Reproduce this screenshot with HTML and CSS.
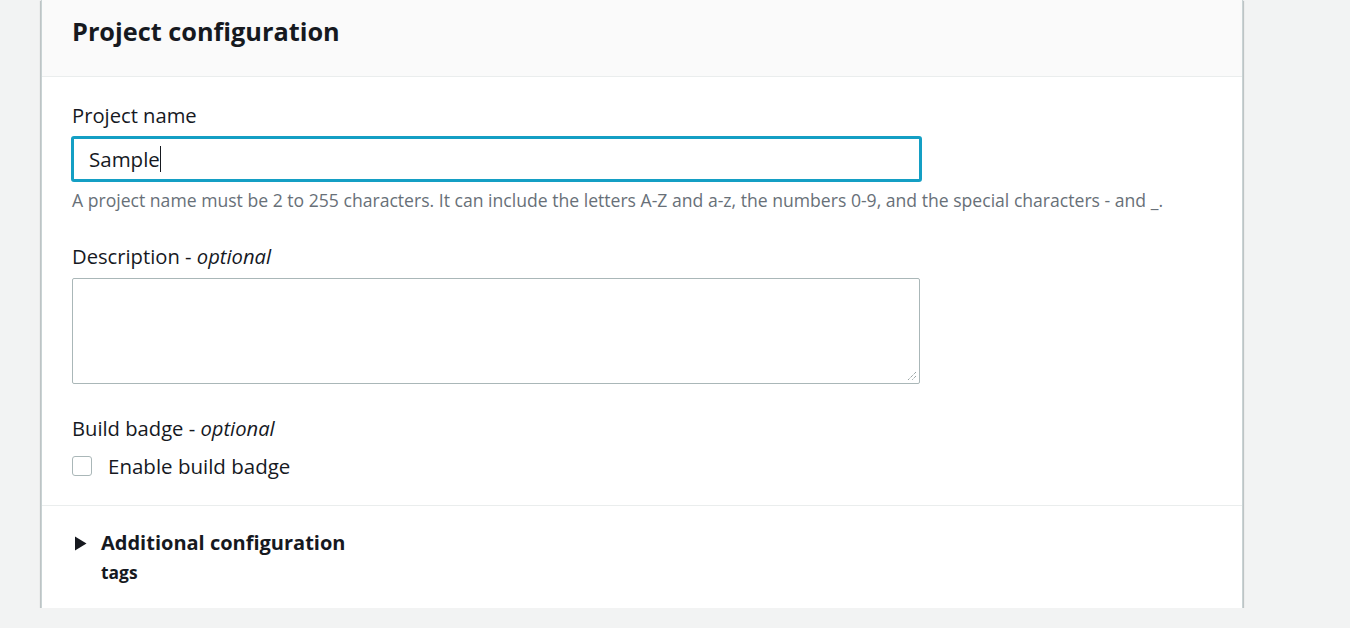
FILE: index.html
```html
<!DOCTYPE html>
<html lang="en">
<head>
<meta charset="utf-8">
<title>Project configuration</title>
<link rel="stylesheet" href="styles.css">
</head>
<body>
<div class="page">
  <section class="card">
    <header class="card-header">
      <h2 class="card-title">Project configuration</h2>
    </header>
    <div class="card-body">
      <div class="field field-name">
        <label class="label">Project name</label>
        <div class="input focused"><span class="value">Sample</span><span class="caret"></span></div>
        <p class="hint">A project name must be 2 to 255 characters. It can include the letters A-Z and a-z, the numbers 0-9, and the special characters - and _.</p>
      </div>
      <div class="field field-desc">
        <label class="label">Description - <i>optional</i></label>
        <div class="textarea">
          <svg class="grip" width="12" height="12" viewBox="0 0 12 12"><path d="M11 3 L3 11 M11 7 L7 11" stroke="#6b7b7c" stroke-width="1" stroke-dasharray="1 1" fill="none"/></svg>
        </div>
      </div>
      <div class="field field-badge">
        <label class="label">Build badge - <i>optional</i></label>
        <div class="check-row">
          <span class="checkbox"></span>
          <span class="check-label">Enable build badge</span>
        </div>
      </div>
    </div>
    <div class="card-footer">
      <div class="expander">
        <svg class="caret-icon" width="13" height="15" viewBox="0 0 13 15"><path d="M1 0.5 L12.5 7.5 L1 14.5 Z" fill="#16191f"/></svg>
        <span class="expander-title">Additional configuration</span>
      </div>
      <div class="expander-sub">tags</div>
    </div>
  </section>
</div>
</body>
</html>
```

FILE: styles.css
```css
html, body {
  margin: 0;
  padding: 0;
  background: #f2f3f3;
  font-family: "Open Sans", "Noto Sans", sans-serif;
  color: #16191f;
}

.page {
  padding-left: 41px;
  width: 1202px;
}

.card {
  background: #ffffff;
  border-left: 1px solid #c9d3d4;
  border-right: 1px solid #c9d3d4;
  box-shadow: 0 1px 1px 0 rgba(0, 28, 36, 0.45), 1px 1px 1px 0 rgba(0, 28, 36, 0.15), -1px 1px 1px 0 rgba(0, 28, 36, 0.15);
}

.card-header {
  background: #fafafa;
  border-bottom: 1px solid #eaeded;
  height: 77px;
  box-sizing: border-box;
  padding: 14px 30px 0;
}

.card-title {
  margin: 0;
  font-size: 25.3px;
  line-height: 34px;
  font-weight: 700;
  color: #16191f;
}

.card-body {
  padding: 27px 30px 28px;
  border-bottom: 1px solid #eaeded;
}

.label {
  display: block;
  font-size: 20.2px;
  line-height: 22px;
  color: #16191f;
}

.label i {
  font-style: italic;
}

.input {
  margin-top: 10px;
  margin-left: -1px;
  width: 851px;
  height: 46px;
  box-sizing: border-box;
  border: 3px solid #149fc4;
  border-radius: 3px;
  display: flex;
  align-items: center;
  padding-left: 15px;
  font-size: 20.5px;
}

.caret {
  display: inline-block;
  width: 1px;
  height: 26px;
  background: #16191f;
  margin-left: 0;
}

.hint {
  margin: 7px 0 0;
  font-size: 17.6px;
  line-height: 22px;
  color: #687078;
}

.field-desc {
  margin-top: 34px;
}

.textarea {
  margin-top: 11px;
  width: 848px;
  height: 106px;
  box-sizing: border-box;
  border: 1px solid #aab7b8;
  border-radius: 2px;
  position: relative;
}

.grip {
  position: absolute;
  right: 2px;
  bottom: 2px;
}

.field-badge {
  margin-top: 33px;
}

.check-row {
  margin-top: 16px;
  display: flex;
  align-items: center;
}

.checkbox {
  border: 1px solid #aab7b8;
  border-radius: 3px;
  box-sizing: border-box;
  width: 20px;
  height: 20px;
}

.check-label {
  margin-left: 16px;
  font-size: 20.5px;
  line-height: 22px;
}

.card-footer {
  padding: 26px 30px 26px;
}

.expander {
  display: flex;
  align-items: center;
}

.caret-icon {
  margin-left: 2px;
}

.expander-title {
  margin-left: 14px;
  font-size: 20px;
  line-height: 22px;
  font-weight: 700;
}

.expander-sub {
  margin-top: 8px;
  margin-left: 29px;
  font-size: 17.4px;
  line-height: 20px;
  font-weight: 700;
}
```
